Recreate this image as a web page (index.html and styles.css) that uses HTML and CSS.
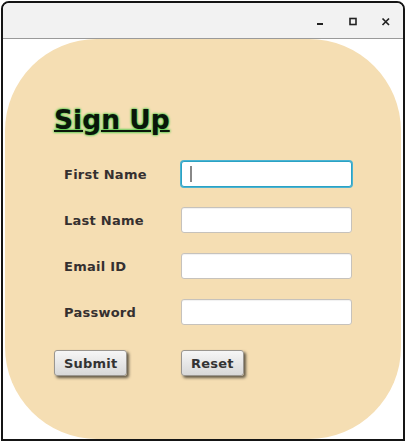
FILE: index.html
```html
<!DOCTYPE html>
<html>
<head>
<meta charset="utf-8">
<link rel="stylesheet" href="styles.css">
</head>
<body>
<div class="window">
  <div class="titlebar">
    <span class="ctl"><svg width="10" height="10" viewBox="0 0 10 10"><rect x="2" y="6" width="6" height="2" fill="#222"/></svg></span>
    <span class="ctl"><svg width="10" height="10" viewBox="0 0 10 10"><rect x="2" y="1.5" width="6" height="6" fill="none" stroke="#222" stroke-width="1.6"/></svg></span>
    <span class="ctl"><svg width="10" height="10" viewBox="0 0 10 10"><path d="M1.5 1.5 L8 8 M8 1.5 L1.5 8" stroke="#222" stroke-width="1.7" fill="none"/></svg></span>
  </div>
  <div class="content">
    <div class="panel">
      <h1 class="title">Sign Up</h1>
      <div class="form">
        <label class="lbl">First Name</label>
        <div class="field focused"><span class="caret"></span></div>
        <label class="lbl">Last Name</label>
        <div class="field"></div>
        <label class="lbl">Email ID</label>
        <div class="field"></div>
        <label class="lbl">Password</label>
        <div class="field"></div>
      </div>
      <div class="actions">
        <div class="slot"><button class="btn">Submit</button></div>
        <div class="slot"><button class="btn">Reset</button></div>
      </div>
    </div>
  </div>
</div>
</body>
</html>
```

FILE: styles.css
```css
html, body {
  margin: 0;
  padding: 0;
  background: #ffffff;
}
body {
  font-family: "DejaVu Sans", Verdana, sans-serif;
}
.window {
  box-sizing: border-box;
  margin: 1px 0 0 1px;
  width: 404px;
  height: 440px;
  border: 2px solid #151515;
  border-radius: 8px 8px 0 0;
  background: #ffffff;
  overflow: hidden;
  display: flex;
  flex-direction: column;
}
.titlebar {
  height: 35px;
  flex: none;
  background: #f2f2f2;
  border-bottom: 1px solid #9a9a9a;
  display: flex;
  justify-content: flex-end;
  align-items: center;
  padding-right: 1px;
}
.ctl {
  width: 33px;
  height: 12px;
  display: flex;
  justify-content: center;
  align-items: center;
  padding-top: 2px;
}
.content {
  flex: 1;
  padding: 0 2px;
}
.panel {
  box-sizing: border-box;
  height: 400px;
  background: #f5deb3;
  border-radius: 92px;
  padding: 66px 0 0 49px;
}
.title {
  margin: 0;
  font-size: 26.5px;
  line-height: 30px;
  font-weight: bold;
  color: #0a160a;
  text-decoration: underline;
  text-decoration-thickness: 2px;
  text-shadow: 0 0 3px #47d147, 0 0 2px #2fbf2f;
}
.form {
  margin: 26px 0 0 10px;
  display: grid;
  grid-template-columns: 117px 171px;
  grid-auto-rows: 26px;
  row-gap: 20px;
}
.lbl {
  align-self: center;
  font-size: 13px;
  letter-spacing: 0.25px;
  font-weight: bold;
  color: #353030;
}
.field {
  position: relative;
  box-sizing: border-box;
  background: #ffffff;
  border: 1px solid #c6c2bc;
  border-radius: 3px;
  box-shadow: inset 0 1px 1px rgba(0,0,0,0.06);
}
.field.focused {
  border: 1px solid #2aa2c4;
  box-shadow: 0 0 0 1px #4cb3d1;
}
.caret {
  position: absolute;
  left: 8px;
  top: 4px;
  width: 1.5px;
  height: 16px;
  background: #888888;
}
.actions {
  margin-top: 25px;
  display: grid;
  grid-template-columns: 127px auto;
}
.slot {
  display: flex;
}
.btn {
  height: 26px;
  padding: 0 9px;
  font-family: "DejaVu Sans", Verdana, sans-serif;
  font-size: 13px;
  letter-spacing: 0.2px;
  font-weight: bold;
  color: #333333;
  background: linear-gradient(#f6f6f6, #d8d8d8);
  border: 1px solid #9a9690;
  border-radius: 3px;
  box-shadow: 2px 2px 3px rgba(0,0,0,0.6);
}
```
